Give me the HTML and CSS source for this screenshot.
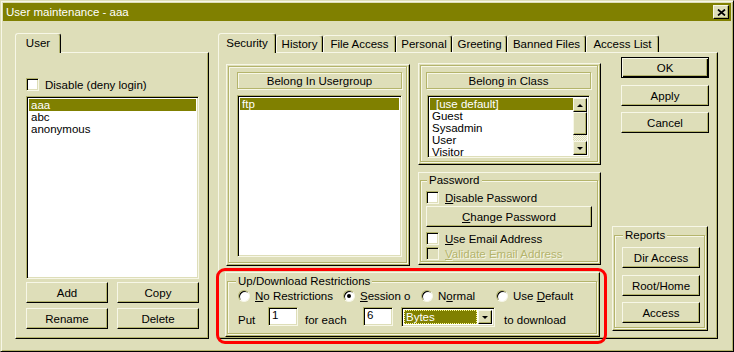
FILE: index.html
```html
<!DOCTYPE html>
<html lang="en">

<head>
    <meta charset="UTF-8">
    <meta name="viewport" content="width=device-width, initial-scale=1.0">
    <title>User maintenance - aaa</title>
    <link rel="stylesheet" href="styles.css">
</head>

<body>
    <div class="window">
        <div class="titlebar">
            <span class="title">User maintenance - aaa</span>
            <button class="close-btn">
                <svg width="9" height="7" viewBox="0 0 9 7">
                    <path d="M1 0.5 L8 6.5 M8 0.5 L1 6.5" stroke="#000" stroke-width="1.7" fill="none" />
                </svg>
            </button>
        </div>

        <div class="client">
            <!-- left: user list -->
            <div class="tabctl user-tabs">
                <div class="tabstrip">
                    <div class="tab active w-user">User</div>
                </div>
                <div class="panel user-panel">
                    <div class="check-row">
                        <span class="checkbox"></span>
                        <span>Disable (deny login)</span>
                    </div>
                    <div class="listbox user-list">
                        <div class="item selected">aaa</div>
                        <div class="item">abc</div>
                        <div class="item">anonymous</div>
                    </div>
                    <div class="btn-grid">
                        <button class="btn">Add</button>
                        <button class="btn">Copy</button>
                        <button class="btn">Rename</button>
                        <button class="btn">Delete</button>
                    </div>
                </div>
            </div>

            <!-- right: properties -->
            <div class="tabctl main-tabs">
                <div class="tabstrip">
                    <div class="tab active w-security">Security</div>
                    <div class="tab w-history">History</div>
                    <div class="tab w-file">File Access</div>
                    <div class="tab w-personal">Personal</div>
                    <div class="tab w-greeting">Greeting</div>
                    <div class="tab w-banned">Banned Files</div>
                    <div class="tab w-access">Access List</div>
                </div>
                <div class="panel main-panel">
                    <div class="middle">
                        <div class="row-top">
                            <div class="frame usergroup-frame">
                                <div class="etched">
                                    <div class="header-box">Belong In Usergroup</div>
                                    <div class="listbox group-list">
                                        <div class="item selected">ftp</div>
                                    </div>
                                </div>
                            </div>

                            <div class="side-col">
                                <div class="frame class-frame">
                                    <div class="etched">
                                        <div class="header-box">Belong in Class</div>
                                        <div class="listbox class-list">
                                            <div class="items">
                                                <div class="item selected indent">[use default]</div>
                                                <div class="item">Guest</div>
                                                <div class="item">Sysadmin</div>
                                                <div class="item">User</div>
                                                <div class="item">Visitor</div>
                                            </div>
                                            <div class="vscroll">
                                                <div class="sb-btn"><span class="arrow-up"></span></div>
                                                <div class="sb-thumb"></div>
                                                <div class="sb-track"></div>
                                                <div class="sb-btn"><span class="arrow-down"></span></div>
                                            </div>
                                        </div>
                                    </div>
                                </div>

                                <div class="frame password-frame">
                                    <div class="group">
                                        <div class="group-title">Password</div>
                                        <div class="check-row pw-first">
                                            <span class="checkbox"></span>
                                            <span><u>D</u>isable Password</span>
                                        </div>
                                        <button class="btn change-btn"><u>C</u>hange Password</button>
                                        <div class="check-row pw-email">
                                            <span class="checkbox"></span>
                                            <span><u>U</u>se Email Address</span>
                                        </div>
                                        <div class="check-row pw-validate disabled">
                                            <span class="checkbox"></span>
                                            <span><u>V</u>alidate Email Address</span>
                                        </div>
                                    </div>
                                </div>
                            </div>
                        </div>

                        <div class="frame updown-frame">
                            <div class="group">
                                <div class="group-title">Up/Download Restrictions</div>
                                <div class="radio-row">
                                    <div class="radio-opt o-none"><span class="radio"></span><span><u>N</u>o Restrictions</span></div>
                                    <div class="radio-opt o-session"><span class="radio checked"></span><span><u>S</u>ession o</span></div>
                                    <div class="radio-opt o-normal"><span class="radio"></span><span>N<u>o</u>rmal</span></div>
                                    <div class="radio-opt"><span class="radio"></span><span>Use <u>D</u>efault</span></div>
                                </div>
                                <div class="limit-row">
                                    <span class="lbl t-put">Put</span>
                                    <div class="textbox">1</div>
                                    <span class="lbl t-each">for each</span>
                                    <div class="textbox">6</div>
                                    <div class="combo">
                                        <div class="combo-value"><span>Bytes</span></div>
                                        <div class="combo-btn"><span class="arrow-down"></span></div>
                                    </div>
                                    <span class="lbl t-dl">to download</span>
                                </div>
                            </div>
                        </div>
                    </div>

                    <div class="buttons-col">
                        <button class="btn side-btn default">OK</button>
                        <button class="btn side-btn apply-btn">Apply</button>
                        <button class="btn side-btn cancel-btn">Cancel</button>
                        <div class="frame reports-frame">
                            <div class="group">
                                <div class="group-title">Reports</div>
                                <button class="btn report-btn r-dir">Dir Access</button>
                                <button class="btn report-btn r-root">Root/Home</button>
                                <button class="btn report-btn r-access">Access</button>
                            </div>
                        </div>
                    </div>
                </div>
            </div>
        </div>

        <div class="highlight"></div>
    </div>
</body>

</html>
```

FILE: styles.css
```css
* {
    margin: 0;
    padding: 0;
    box-sizing: border-box;
}

body {
    background: #dedeb9;
    font-family: "Liberation Sans", Arial, sans-serif;
    font-size: 11.5px;
    color: #000;
}

u {
    text-decoration: underline;
    text-underline-offset: 1px;
}

/* window frame */

.window {
    position: relative;
    width: 734px;
    height: 352px;
    background: #dedeb9;
    border: 1px solid;
    border-color: #dedeb9 #000 #000 #dedeb9;
    box-shadow: inset 1px 1px #f7f7e7, inset -1px -1px #b4b46c;
    padding: 2px;
}

.titlebar {
    height: 18px;
    background: #808000;
    color: #fff;
    display: flex;
    align-items: center;
    justify-content: space-between;
    padding: 0 2px 0 3px;
}

.close-btn {
    width: 16px;
    height: 14px;
    background: #dedeb9;
    border: 1px solid;
    border-color: #f7f7e7 #000 #000 #f7f7e7;
    box-shadow: inset -1px -1px #b4b46c;
    display: flex;
    align-items: center;
    justify-content: center;
}

.client {
    display: flex;
    gap: 9px;
    padding: 12px 0 0 12px;
}

/* tabs */

.tabctl {
    display: flex;
    flex-direction: column;
}

.user-tabs {
    width: 194px;
}

.main-tabs {
    width: 500px;
}

.tabstrip {
    display: flex;
    align-items: flex-end;
    height: 19px;
}

.tab {
    height: 17px;
    border: 1px solid;
    border-bottom: none;
    border-color: #f7f7e7 #000 transparent #f7f7e7;
    border-radius: 3px 3px 0 0;
    box-shadow: inset -1px 0 #b4b46c;
    display: flex;
    align-items: center;
    justify-content: center;
    white-space: nowrap;
}

.tab.active {
    position: relative;
    z-index: 1;
    height: 20px;
    margin-bottom: -1px;
    padding-bottom: 2px;
    background: #dedeb9;
}

.w-user { width: 46px; }
.w-security { width: 58px; }
.w-history { width: 47px; }
.w-file { width: 73px; }
.w-personal { width: 56px; }
.w-greeting { width: 55px; }
.w-banned { width: 79px; }
.w-access { width: 73px; }

.panel {
    height: 287px;
    border: 1px solid;
    border-color: #f7f7e7 #000 #000 #f7f7e7;
    box-shadow: inset -1px -1px #b4b46c;
}

/* common controls */

.check-row {
    display: flex;
    align-items: center;
    height: 13px;
    white-space: nowrap;
}

.checkbox {
    flex: none;
    width: 13px;
    height: 13px;
    margin-right: 6px;
    background: #fff;
    border: 1px solid;
    border-color: #b4b46c #f7f7e7 #f7f7e7 #b4b46c;
    box-shadow: inset 1px 1px #000, inset -1px -1px #dedeb9;
}

.check-row.disabled {
    color: #b4b46c;
    text-shadow: 1px 1px #f7f7e7;
}

.check-row.disabled .checkbox {
    background: #dedeb9;
}

.listbox {
    background: #fff;
    border: 1px solid;
    border-color: #b4b46c #f7f7e7 #f7f7e7 #b4b46c;
    box-shadow: inset 1px 1px #000, inset -1px -1px #dedeb9;
    padding: 2px;
    overflow: hidden;
}

.item {
    height: 12px;
    line-height: 12px;
    padding-left: 2px;
    white-space: nowrap;
}

.item.selected {
    background: #808000;
    color: #fff;
}

.item.indent {
    padding-left: 6px;
}

.btn {
    font: inherit;
    color: #000;
    background: #dedeb9;
    height: 21px;
    border: 1px solid;
    border-color: #f7f7e7 #000 #000 #f7f7e7;
    box-shadow: inset -1px -1px #b4b46c;
    display: flex;
    align-items: center;
    justify-content: center;
    white-space: nowrap;
}

.btn.default {
    border-color: #000;
    box-shadow: inset 1px 1px #f7f7e7, inset -1px -1px #000, inset -2px -2px #b4b46c;
}

.frame {
    display: flex;
    flex-direction: column;
    border: 1px solid;
    border-color: #f7f7e7 #000 #000 #f7f7e7;
    box-shadow: inset -1px -1px #b4b46c;
    padding: 1px 2px 2px 1px;
}

.etched {
    flex: 1;
    border: 1px solid #b4b46c;
    box-shadow: inset 1px 1px #f7f7e7, 1px 1px #f7f7e7;
}

.group {
    flex: 1;
    display: flex;
    flex-direction: column;
    align-items: flex-start;
    border: 1px solid #b4b46c;
    box-shadow: inset 1px 1px #f7f7e7, 1px 1px #f7f7e7;
}

.group-title {
    height: 13px;
    line-height: 13px;
    margin: -7px 0 0 6px;
    padding: 0 2px;
    background: #dedeb9;
    white-space: nowrap;
}

.header-box {
    width: 165px;
    height: 17px;
    border: 1px solid #b4b46c;
    box-shadow: inset 1px 1px #f7f7e7, 1px 1px #f7f7e7;
    display: flex;
    align-items: center;
    justify-content: center;
}

/* left panel */

.user-panel {
    padding: 25px 0 0 10px;
}

.user-list {
    width: 173px;
    height: 183px;
    margin-top: 5px;
}

.btn-grid {
    display: grid;
    grid-template-columns: 82px 82px;
    column-gap: 9px;
    row-gap: 5px;
    margin-top: 3px;
}

/* right panel */

.main-panel {
    display: flex;
    padding-left: 6px;
}

.middle {
    width: 376px;
    display: flex;
    flex-direction: column;
    padding-top: 10px;
}

.row-top {
    display: flex;
    height: 203px;
}

.usergroup-frame {
    width: 184px;
    height: 202px;
    margin: 1px 0 0 1px;
}

.usergroup-frame .etched {
    padding: 5px 0 0 8px;
}

.group-list {
    width: 165px;
    height: 162px;
    margin-top: 6px;
}

.side-col {
    width: 183px;
    margin-left: 8px;
    display: flex;
    flex-direction: column;
}

.class-frame {
    height: 102px;
}

.class-frame .etched {
    padding: 6px 0 0 5px;
}

.class-list {
    display: flex;
    width: 163px;
    height: 63px;
    margin: 6px 0 0 1px;
}

.items {
    flex: 1;
}

.vscroll {
    width: 14px;
    display: flex;
    flex-direction: column;
}

.sb-btn {
    height: 14px;
    background: #dedeb9;
    border: 1px solid;
    border-color: #f7f7e7 #000 #000 #f7f7e7;
    box-shadow: inset -1px -1px #b4b46c;
    display: flex;
    align-items: center;
    justify-content: center;
}

.sb-thumb {
    height: 23px;
    background: #dedeb9;
    border: 1px solid;
    border-color: #f7f7e7 #000 #000 #f7f7e7;
    box-shadow: inset -1px -1px #b4b46c;
}

.sb-track {
    flex: 1;
    background: repeating-conic-gradient(#f7f7e7 0 25%, #dedeb9 0 50%) 0 0 / 2px 2px;
}

.arrow-up {
    width: 0;
    height: 0;
    border-left: 3px solid transparent;
    border-right: 3px solid transparent;
    border-bottom: 3px solid #000;
}

.arrow-down {
    width: 0;
    height: 0;
    border-left: 3px solid transparent;
    border-right: 3px solid transparent;
    border-top: 3px solid #000;
}

.password-frame {
    height: 93px;
    margin-top: 7px;
}

.password-frame .group {
    margin-top: 6px;
}

.pw-first {
    margin: 4px 0 0 5px;
}

.change-btn {
    width: 166px;
    margin: 2px 0 0 5px;
}

.pw-email {
    margin: 5px 0 0 5px;
}

.pw-validate {
    margin: 2px 0 0 5px;
}

/* up/download */

.updown-frame {
    width: 375px;
    height: 65px;
    margin-top: 6px;
}

.updown-frame .group {
    margin-top: 7px;
}

.updown-frame .group-title {
    margin-left: 8px;
}

.radio-row {
    display: flex;
    height: 12px;
    margin: 2px 0 0 10px;
}

.radio-opt {
    display: flex;
    align-items: center;
    white-space: nowrap;
}

.o-none { width: 105px; }
.o-session { width: 78px; overflow: hidden; }
.o-normal { width: 75px; }

.radio {
    position: relative;
    flex: none;
    width: 12px;
    height: 12px;
    margin-right: 5px;
    border-radius: 50%;
    background: #fff;
    border: 1px solid;
    border-color: #b4b46c #f7f7e7 #f7f7e7 #b4b46c;
    box-shadow: inset 1px 1px #000;
}

.radio.checked::after {
    content: "";
    position: absolute;
    left: 3px;
    top: 3px;
    width: 4px;
    height: 4px;
    border-radius: 50%;
    background: #000;
}

.limit-row {
    display: flex;
    align-items: flex-start;
    margin: 5px 0 0 10px;
}

.lbl {
    margin-top: 7px;
    white-space: nowrap;
}

.t-put { width: 30px; }
.t-each { width: 58px; margin-left: 7px; }
.t-dl { margin-left: 9px; }

.textbox {
    width: 30px;
    height: 19px;
    line-height: 15px;
    padding-left: 3px;
    background: #fff;
    border: 1px solid;
    border-color: #b4b46c #f7f7e7 #f7f7e7 #b4b46c;
    box-shadow: inset 1px 1px #000, inset -1px -1px #dedeb9;
}

.combo {
    display: flex;
    width: 94px;
    height: 20px;
    margin-left: 8px;
    padding: 2px;
    background: #fff;
    border: 1px solid;
    border-color: #b4b46c #f7f7e7 #f7f7e7 #b4b46c;
    box-shadow: inset 1px 1px #000, inset -1px -1px #dedeb9;
}

.combo-value {
    flex: 1;
    margin-right: 1px;
    padding-left: 1px;
    background: #808000;
    color: #fff;
    border: 1px dotted #ffff90;
    line-height: 13px;
}

.combo-btn {
    width: 14px;
    background: #dedeb9;
    border: 1px solid;
    border-color: #f7f7e7 #000 #000 #f7f7e7;
    box-shadow: inset -1px -1px #b4b46c;
    display: flex;
    align-items: center;
    justify-content: center;
}

/* right buttons */

.buttons-col {
    width: 97px;
    margin-left: 11px;
    padding-top: 4px;
    display: flex;
    flex-direction: column;
}

.side-btn {
    width: 88px;
    margin-left: 9px;
}

.apply-btn { margin-top: 7px; }
.cancel-btn { margin-top: 6px; }

.reports-frame {
    width: 96px;
    height: 105px;
    margin-top: 93px;
}

.reports-frame .group {
    margin-top: 7px;
}

.reports-frame .group-title {
    margin-left: 8px;
}

.report-btn {
    width: 78px;
    margin-left: 7px;
}

.r-dir { margin-top: 5px; }
.r-root { margin-top: 7px; }
.r-access { margin-top: 6px; }

/* red annotation around the restrictions box */

.highlight {
    position: absolute;
    left: 215px;
    top: 267px;
    width: 391px;
    height: 76px;
    border: 3px solid #f00;
    border-radius: 9px;
    pointer-events: none;
}
```
